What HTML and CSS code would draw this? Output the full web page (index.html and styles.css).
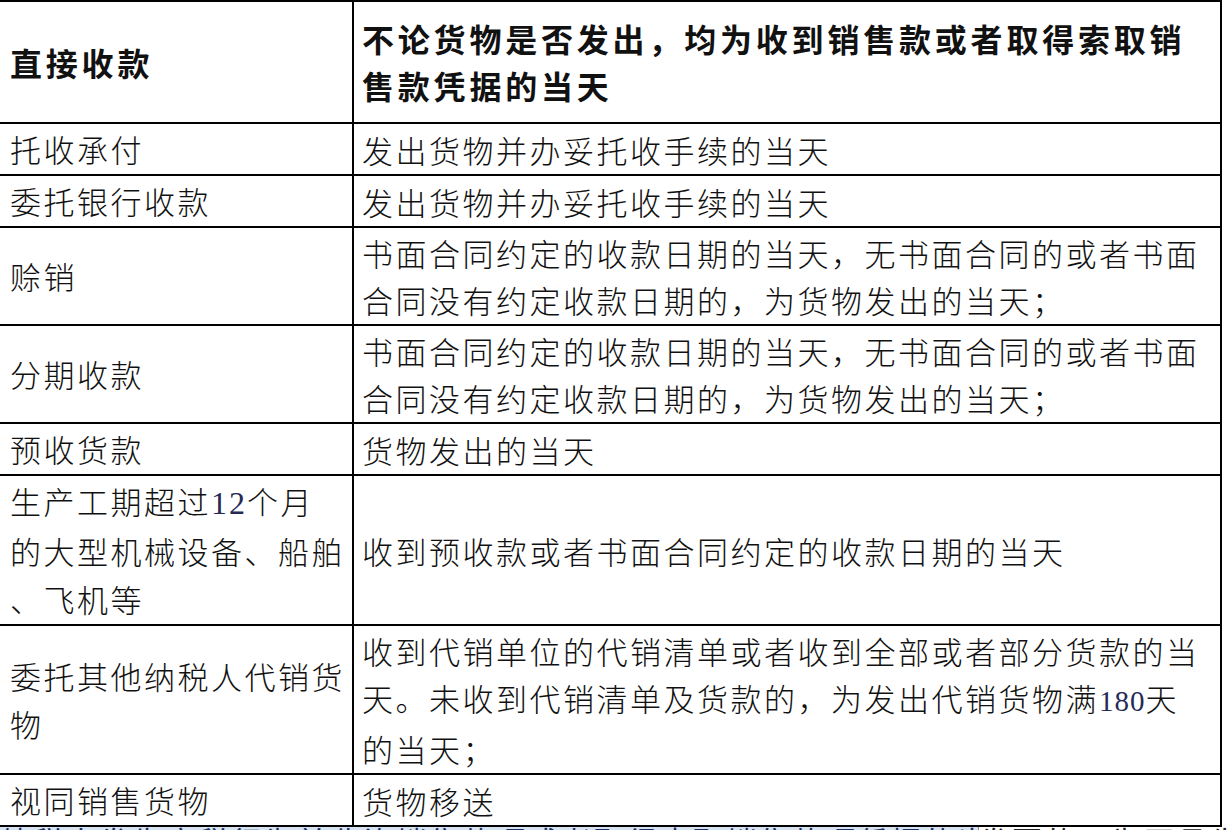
FILE: index.html
```html
<!DOCTYPE html>
<html lang="zh-CN">
<head>
<meta charset="utf-8">
<title>纳税义务发生时间</title>
<link rel="stylesheet" href="styles.css">
</head>
<body>
<table class="tax-table">
  <colgroup>
    <col class="col-method">
    <col class="col-time">
  </colgroup>
  <tr class="head-row">
    <td class="c-method">直接收款</td>
    <td class="c-time">不论货物是否发出，均为收到销售款或者取得索取销售款凭据的当天</td>
  </tr>
  <tr>
    <td class="c-method">托收承付</td>
    <td class="c-time">发出货物并办妥托收手续的当天</td>
  </tr>
  <tr>
    <td class="c-method">委托银行收款</td>
    <td class="c-time">发出货物并办妥托收手续的当天</td>
  </tr>
  <tr>
    <td class="c-method">赊销</td>
    <td class="c-time">书面合同约定的收款日期的当天，无书面合同的或者书面合同没有约定收款日期的，为货物发出的当天；</td>
  </tr>
  <tr>
    <td class="c-method">分期收款</td>
    <td class="c-time">书面合同约定的收款日期的当天，无书面合同的或者书面合同没有约定收款日期的，为货物发出的当天；</td>
  </tr>
  <tr>
    <td class="c-method">预收货款</td>
    <td class="c-time">货物发出的当天</td>
  </tr>
  <tr>
    <td class="c-method">生产工期超过<span class="num">12</span>个月的大型机械设备、船舶、飞机等</td>
    <td class="c-time">收到预收款或者书面合同约定的收款日期的当天</td>
  </tr>
  <tr>
    <td class="c-method">委托其他纳税人代销货物</td>
    <td class="c-time">收到代销单位的代销清单或者收到全部或者部分货款的当天。未收到代销清单及货款的，为发出代销货物满<span class="num num-sm">180</span>天的当天；</td>
  </tr>
  <tr>
    <td class="c-method">视同销售货物</td>
    <td class="c-time">货物移送</td>
  </tr>
</table>
<div class="next-line">
  <span class="hl">纳税人发生应税行为并收讫销售款项或者取得索取销售款项凭据的当天；先开具</span>
  <span class="plain">发票的，为开具发票的当天。</span>
</div>
</body>
</html>
```

FILE: styles.css
```css
html, body {
  margin: 0;
  padding: 0;
  background: #ffffff;
}

body {
  width: 1228px;
  height: 830px;
  overflow: hidden;
  font-family: "Noto Sans CJK SC", "Noto Sans", sans-serif;
  color: #111111;
}

.tax-table {
  table-layout: fixed;
  width: 1222px;
  border-collapse: separate;
  border-spacing: 0;
  border-bottom: 2px solid #000;
}

.col-method {
  width: 352px;
}

.col-time {
  width: 870px;
}

.tax-table td {
  border-top: 2px solid #000;
  vertical-align: middle;
  font-size: 31px;
  font-weight: 300;
  letter-spacing: 2.5px;
  word-break: break-all;
  line-break: anywhere;
}

.c-method {
  padding: 1px 6px 1px 10px;
  line-height: 48px;
}

.c-time {
  padding: 1px 16px 1px 8px;
  line-height: 47px;
  border-left: 2px solid #000;
  border-right: 2px solid #000;
}

.head-row td {
  padding-top: 13px;
  padding-bottom: 13px;
  font-weight: 700;
  font-size: 32px;
  letter-spacing: 3.8px;
  line-height: 47px;
}

.num {
  font-family: "Liberation Serif", "DejaVu Serif", serif;
  font-size: 32px;
  font-weight: 400;
  letter-spacing: 2px;
  color: #262a55;
}

.num-sm {
  font-size: 29px;
  letter-spacing: 1px;
}

.next-line {
  display: flex;
  height: 10px;
  font-size: 30px;
  line-height: 26px;
  letter-spacing: 3px;
  white-space: nowrap;
  color: #1c2f66;
}

.hl {
  display: block;
  flex: 0 0 978px;
  overflow: hidden;
  background: #d8e3f2;
}

.plain {
  display: block;
  flex: 1 1 auto;
  overflow: hidden;
  color: #222;
  border-left: 1px solid #888;
}
```
